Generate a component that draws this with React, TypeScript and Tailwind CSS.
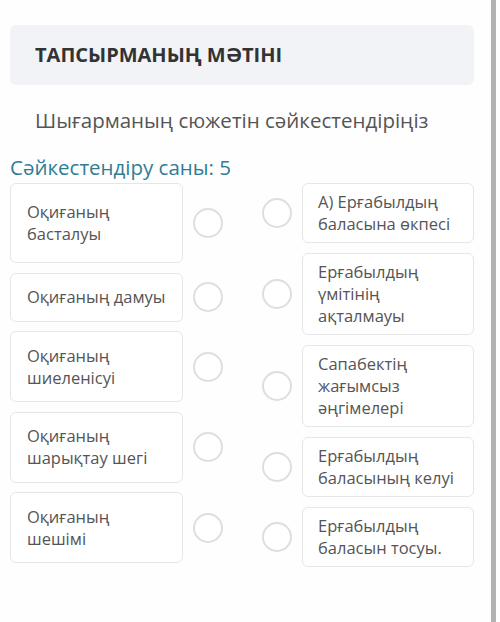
const left = [
  { text: "Оқиғаның басталуы", cls: "min-h-[80px]" },
  { text: "Оқиғаның дамуы", cls: "" },
  { text: "Оқиғаның шиеленісуі", cls: "" },
  { text: "Оқиғаның шарықтау шегі", cls: "" },
  { text: "Оқиғаның шешімі", cls: "" },
];

const right = [
  "А) Ерғабылдың баласына өкпесі",
  "Ерғабылдың үмітінің ақталмауы",
  "Сапабектің жағымсыз әңгімелері",
  "Ерғабылдың баласының келуі",
  "Ерғабылдың баласын тосуы.",
];

function Dot() {
  return (
    <span className="block w-[30px] h-[30px] shrink-0 rounded-full border-2 border-[#dedede] bg-white" />
  );
}

export default function App() {
  return (
    <div
      className="flex w-[500px] h-[622px] bg-white overflow-hidden"
      style={{ fontFamily: '"Open Sans", "Noto Sans", sans-serif' }}
    >
      <div className="w-[491px] shrink-0 px-[10px] pt-[25px] bg-[#fefefe]">
        <div className="w-[464px] h-[60px] rounded-md bg-[#f2f3f7] flex items-center px-[25px]">
          <h1 className="text-[20px] font-bold text-[#333]">
            ТАПСЫРМАНЫҢ МӘТІНІ
          </h1>
        </div>

        <p className="mt-[21px] pl-[25px] text-[20.5px] leading-[28px] text-[#555]">
          Шығарманың сюжетін сәйкестендіріңіз
        </p>

        <div className="mt-[20px] text-[20.5px] leading-[26px] text-[#2f7d95]">
          Сәйкестендіру саны: 5
        </div>

        <div className="mt-[3px] flex">
          {/* left column */}
          <div className="flex flex-col gap-[9.5px]">
            {left.map((item) => (
              <div key={item.text} className="flex items-center">
                <div
                  className={`w-[173px] flex items-center rounded-md border border-[#e6e6e6] bg-white px-[16px] py-[12.5px] text-[16.5px] leading-[22px] text-[#555] ${item.cls}`}
                >
                  <span>{item.text}</span>
                </div>
                <span className="ml-[10px]">
                  <Dot />
                </span>
              </div>
            ))}
          </div>

          {/* right column */}
          <div className="ml-[39px] flex flex-col gap-[10px]">
            {right.map((t) => (
              <div key={t} className="flex items-center">
                <Dot />
                <div className="ml-[10px] w-[172px] rounded-md border border-[#e6e6e6] bg-white px-[15px] py-[7px] text-[16.5px] leading-[22px] text-[#555]">
                  {t}
                </div>
              </div>
            ))}
          </div>
        </div>
      </div>
      <div className="w-[5px] shrink-0 bg-[#b3b3b3]" />
    </div>
  );
}
